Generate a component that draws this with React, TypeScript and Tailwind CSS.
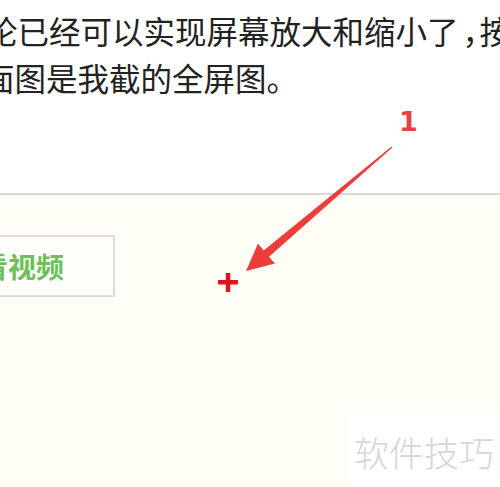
import React from 'react';

const cjk = { fontFamily: '"Microsoft YaHei", "Noto Sans CJK SC", sans-serif' };

function Annotation() {
  return (
    <svg className="absolute left-0 top-0 pointer-events-none" width="500" height="487" viewBox="0 0 500 487">
      <polygon
        points="392.4,147.5 269,256.8 275,263.5 246,271 258,243.5 263.6,250.5 391.6,146.5"
        fill="#ee3b3b"
      />
      <rect x="218" y="280" width="20" height="4.5" fill="#d9161e" />
      <rect x="225.8" y="273" width="4.5" height="19" fill="#d9161e" />
    </svg>
  );
}

export default function App() {
  return (
    <div className="relative w-[500px] h-[487px] overflow-hidden bg-white">
      <div className="h-[193px] pt-[7px] text-[31.5px] leading-[47px] text-[#222] whitespace-nowrap" style={cjk}>
        <p className="-ml-[14px]">
          论已经可以实现屏幕放大和缩小了
          <span className="inline-block w-[21px] pl-[4px] overflow-hidden align-top">，</span>按
        </p>
        <p className="-ml-[17px]">面图是我截的全屏图。</p>
      </div>
      <div className="h-[2px] bg-[#d9d9d7]" />
      <div className="h-[292px] bg-[#fffef6] pt-[40px]">
        <div className="-ml-[40px] w-[155px] h-[62px] border-2 border-[#dcdcd8] bg-[#fefefb] flex items-center pl-[18px]">
          <span className="text-[28px] font-bold text-[#6cc05a] whitespace-nowrap" style={cjk}>看视频</span>
        </div>
      </div>

      <span
        className="absolute left-[399px] top-[108px] text-[27px] leading-none font-semibold text-[#e8423f]"
        style={{ fontFamily: '"DejaVu Sans", sans-serif' }}
      >
        1
      </span>

      <Annotation />

      <div className="absolute left-[350px] top-[413px] w-[150px] h-[74px] bg-white pl-[4px] pt-[13px]">
        <span className="text-[35px] leading-[52px] font-light text-[#d6d6d6] whitespace-nowrap" style={cjk}>软件技巧</span>
      </div>
    </div>
  );
}
